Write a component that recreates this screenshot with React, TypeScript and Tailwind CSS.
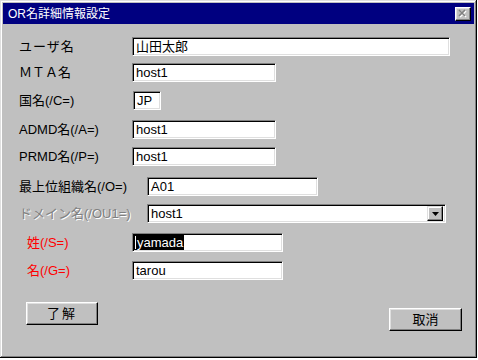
import React from "react";

const FONT = { fontFamily: '"Liberation Sans", "Noto Sans CJK JP", sans-serif' };

function Field({ className, children }: { className: string; children?: React.ReactNode }) {
  return (
    <div
      className={
        "h-[19px] bg-white border border-t-[#808080] border-l-[#808080] border-b-white border-r-white shadow-[inset_1px_1px_0_#000,inset_-1px_-1px_0_#dfdfdf] flex items-center pl-[3px] text-[13px] leading-none text-black overflow-hidden " +
        className
      }
    >
      {children}
    </div>
  );
}

function Row({
  className,
  labelClass,
  label,
  children,
}: {
  className: string;
  labelClass: string;
  label: React.ReactNode;
  children: React.ReactNode;
}) {
  return (
    <div className={"flex items-center h-[19px] " + className}>
      <div className={"text-[13px] leading-none whitespace-nowrap " + labelClass}>{label}</div>
      {children}
    </div>
  );
}

function Button({ className, children }: { className: string; children: React.ReactNode }) {
  return (
    <div
      className={
        "bg-[#c0c0c0] border border-t-white border-l-white border-b-black border-r-black shadow-[inset_-1px_-1px_0_#808080,inset_1px_1px_0_#dfdfdf] flex items-center justify-center text-[13px] leading-none text-black " +
        className
      }
    >
      {children}
    </div>
  );
}

export default function App() {
  return (
    <div className="w-[478px] h-[360px] bg-white" style={FONT}>
      <div className="w-[477px] h-[358px] bg-[#c0c0c0] p-[3px] flex flex-col shadow-[inset_-1px_-1px_0_#000,inset_1px_1px_0_#dfdfdf,inset_-2px_-2px_0_#808080,inset_2px_2px_0_#fff]">
        {/* title bar */}
        <div className="h-[21px] bg-[#000080] flex items-center justify-between pl-[5px] pr-[3px]">
          <span className="text-white text-[12px] leading-none">OR名詳細情報設定</span>
          <div className="w-[16px] h-[14px] bg-[#c0c0c0] border border-t-white border-l-white border-b-black border-r-black shadow-[inset_-1px_-1px_0_#808080,inset_1px_1px_0_#dfdfdf] flex items-center justify-center">
            <svg width="10" height="9" viewBox="0 0 10 9">
              <path d="M2 2 L8 8 M8 2 L2 8" stroke="#ffffff" strokeWidth="1.6" />
              <path d="M1 1 L7 7 M7 1 L1 7" stroke="#808080" strokeWidth="1.6" />
            </svg>
          </div>
        </div>

        {/* body */}
        <div className="flex flex-col pl-[16px]">
          <Row className="mt-[13px]" labelClass="w-[113px] tracking-[1px]" label="ユーザ名">
            <Field className="w-[318px]">山田太郎</Field>
          </Row>
          <Row className="mt-[7px]" labelClass="w-[113px]" label="ＭＴＡ名">
            <Field className="w-[144px]">host1</Field>
          </Row>
          <Row className="mt-[9px]" labelClass="w-[114px]" label="国名(/C=)">
            <Field className="w-[28px]">JP</Field>
          </Row>
          <Row className="mt-[10px]" labelClass="w-[113px]" label="ADMD名(/A=)">
            <Field className="w-[144px]">host1</Field>
          </Row>
          <Row className="mt-[8px]" labelClass="w-[113px]" label="PRMD名(/P=)">
            <Field className="w-[144px]">host1</Field>
          </Row>
          <Row className="mt-[11px]" labelClass="w-[128px]" label="最上位組織名(/O=)">
            <Field className="w-[171px]">A01</Field>
          </Row>
          <Row
            className="mt-[8px]"
            labelClass="w-[128px] text-[#808080] [text-shadow:1px_1px_0_#fff]"
            label="ドメイン名(/OU1=)"
          >
            <div className="w-[299px] h-[19px] bg-white border border-t-[#808080] border-l-[#808080] border-b-white border-r-white shadow-[inset_1px_1px_0_#000,inset_-1px_-1px_0_#dfdfdf] flex items-center justify-between pl-[3px] pr-[2px]">
              <span className="text-[13px] leading-none text-black">host1</span>
              <div className="w-[16px] h-[15px] bg-[#c0c0c0] border border-t-[#dfdfdf] border-l-[#dfdfdf] border-b-black border-r-black shadow-[inset_-1px_-1px_0_#808080,inset_1px_1px_0_#fff] flex items-center justify-center">
                <svg width="7" height="4" viewBox="0 0 7 4">
                  <path d="M0 0 H7 L3.5 4 Z" fill="#000" />
                </svg>
              </div>
            </div>
          </Row>
          <Row className="mt-[10px]" labelClass="w-[113px] pl-[8px] text-[#ff0000]" label="姓(/S=)">
            <Field className="w-[151px] !pl-[1px]">
              <span className="bg-black text-white h-[15px] flex items-center pl-[3px] pr-[1px] relative">
                <span className="absolute left-[1px] top-[1px] w-px h-[13px] bg-white" />
                yamada
              </span>
            </Field>
          </Row>
          <Row className="mt-[9px]" labelClass="w-[113px] pl-[8px] text-[#ff0000]" label="名(/G=)">
            <Field className="w-[151px]">tarou</Field>
          </Row>
        </div>

        <div className="flex justify-between items-start pl-[23px] pr-[12px] mt-[22px]">
          <Button className="w-[72px] h-[23px] tracking-[2px]">了解</Button>
          <Button className="w-[73px] h-[23px] mt-[6px]">取消</Button>
        </div>
      </div>
    </div>
  );
}
